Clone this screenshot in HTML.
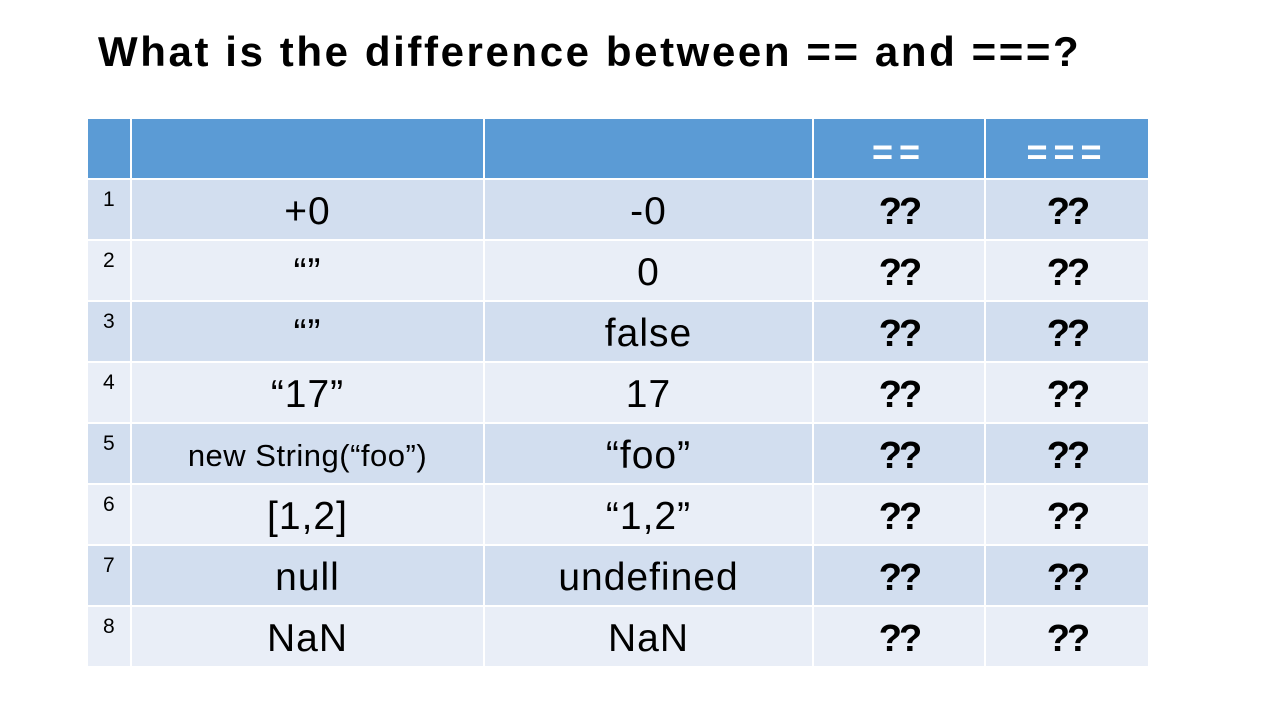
<!DOCTYPE html>
<html><head><style>
body{margin:0;width:1280px;height:720px;background:#fff;position:relative;overflow:hidden;font-family:"Liberation Sans",sans-serif;}
h1{position:absolute;left:98px;top:28px;margin:0;font-size:42px;font-weight:bold;color:#000;letter-spacing:2.6px;white-space:nowrap}
.c{position:absolute;display:flex;align-items:center;justify-content:center;font-size:39px;letter-spacing:1px;color:#000;white-space:nowrap;box-sizing:border-box;padding-top:5px}
.n{position:absolute;font-size:21px;color:#000}
.q{font-weight:bold;font-size:38px;letter-spacing:-3px}
.h{background:#5b9bd5;color:#fff;font-weight:bold;font-size:36px;letter-spacing:6px;padding-top:6px}
</style></head><body>
<h1>What is the difference between == and ===?</h1>
<div id="t"></div>
<script>
(function(){
var cols=[[88,42],[132,351],[485,327],[814,170],[986,162]];
var data=[["+0","-0"],["“”","0"],["“”","false"],["“17”","17"],["new String(“foo”)","“foo”"],["[1,2]","“1,2”"],["null","undefined"],["NaN","NaN"]];
var h='';
var hd=['','','','==','==='];
for(var i=0;i<5;i++)h+='<div class="c h" style="left:'+cols[i][0]+'px;top:119px;width:'+cols[i][1]+'px;height:59px">'+hd[i]+'</div>';
for(var r=0;r<8;r++){var y=180+r*61;var bg=r%2?'#e9eef7':'#d2deef';
for(var i=0;i<5;i++){var txt='',cls='c',st='';
if(i==0){txt='';}
else if(i<3){txt=data[r][i-1];if(r==4&&i==1)st='font-size:31px;letter-spacing:0.5px;';}
else {txt='??';cls+=' q';}
h+='<div class="'+cls+'" style="'+st+'left:'+cols[i][0]+'px;top:'+y+'px;width:'+cols[i][1]+'px;height:59px;background:'+bg+'">'+txt+'</div>';}
h+='<div class="n" style="left:103px;top:'+(y+8)+'px">'+(r+1)+'</div>';}
document.getElementById('t').innerHTML=h;
})();
</script>
</body></html>
